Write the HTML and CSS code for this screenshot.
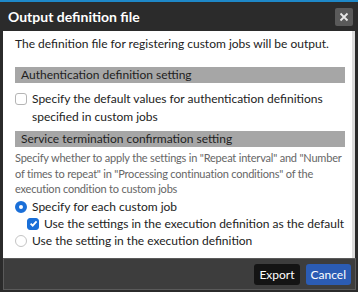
FILE: index.html
```html
<!DOCTYPE html>
<html>
<head>
    <title>Output definition file</title>
    <link rel="stylesheet" href="styles.css">
</head>
<body>
    <div class="dialog">
        <div class="title-bar">
            <div class="title">Output definition file</div>
            <button class="close-btn" title="Close">
                <svg width="10" height="10" viewBox="0 0 10 10"><path d="M1.5 1.5L8.5 8.5M8.5 1.5L1.5 8.5" stroke="#e8e8e8" stroke-width="1.8"/></svg>
            </button>
        </div>
        <div class="content">
            <p class="intro">The definition file for registering custom jobs will be output.</p>
            <div class="section-head">Authentication definition setting</div>
            <label class="option first">
                <span class="box"></span>
                <span class="label-text">Specify the default values for authentication definitions specified in custom jobs</span>
            </label>
            <div class="section-head">Service termination confirmation setting</div>
            <p class="note">Specify whether to apply the settings in "Repeat interval" and "Number of times to repeat" in "Processing continuation conditions" of the execution condition to custom jobs</p>
            <label class="option">
                <span class="radio checked"></span>
                <span class="label-text">Specify for each custom job</span>
            </label>
            <label class="option sub">
                <span class="box checked">
                    <svg width="9" height="9" viewBox="0 0 10 10"><path d="M1.8 5.2L4.1 7.4L8.4 2.6" stroke="#fff" stroke-width="2" fill="none"/></svg>
                </span>
                <span class="label-text">Use the settings in the execution definition as the default</span>
            </label>
            <label class="option">
                <span class="radio"></span>
                <span class="label-text">Use the setting in the execution definition</span>
            </label>
        </div>
        <div class="footer">
            <button class="btn btn-dark">Export</button>
            <button class="btn btn-blue">Cancel</button>
        </div>
    </div>
</body>
</html>
```

FILE: styles.css
```css
body {
    margin: 0;
    background: #fff;
    font-family: Lato, "Noto Sans", sans-serif;
    font-size: 12px;
    color: #222;
}
.dialog {
    width: 358px;
    height: 292px;
    background: #2b2b2b;
    border-top: 2px solid #1e88c8;
    box-sizing: border-box;
    display: flex;
    flex-direction: column;
}
.title-bar {
    flex: none;
    height: 29px;
    display: flex;
    align-items: center;
    justify-content: space-between;
    padding: 0 5px 0 8px;
}
.title {
    color: #fff;
    font-weight: bold;
    font-size: 14px;
}
.close-btn {
    width: 18px;
    height: 18px;
    background: #5a5a5a;
    border: none;
    border-radius: 2px;
    padding: 0;
    display: flex;
    align-items: center;
    justify-content: center;
}
.content {
    flex: 1;
    min-height: 0;
    overflow: hidden;
    background: #fff;
    margin: 0 3px 0 3px;
    padding: 0 7px 0 12px;
    border-right: 3px solid #dcdcdc;
}
.intro {
    margin: 4px 0 14px;
    line-height: 18px;
}
.section-head {
    background: #a6a6a6;
    color: #1e1e1e;
    line-height: 16px;
    padding: 0 6px;
}
.option {
    display: flex;
    align-items: flex-start;
    gap: 5px;
    line-height: 17px;
}
.option.first {
    line-height: 18px;
    margin: 7px 0 5px;
}
.option.sub {
    margin-left: 12px;
}
.box {
    flex: none;
    width: 10px;
    height: 10px;
    margin-top: 3px;
    border: 1px solid #b5b5b5;
    border-radius: 3px;
    display: flex;
    align-items: center;
    justify-content: center;
}
.box.checked {
    background: #1a6fd8;
    border-color: #1a6fd8;
}
.radio {
    flex: none;
    width: 10px;
    height: 10px;
    margin-top: 3px;
    border: 1px solid #c4c4c4;
    border-radius: 50%;
}
.radio.checked {
    width: 4px;
    height: 4px;
    border: 4px solid #1a6fd8;
}
.note {
    margin: 3px 2px 1px 0;
    font-size: 11px;
    letter-spacing: -0.2px;
    line-height: 15.5px;
    color: #666;
}
.footer {
    flex: none;
    height: 30px;
    background: #3d3d3d;
    margin: 0 2px 2px 3px;
    border: 1px solid #5a5a5a;
    display: flex;
    align-items: center;
    justify-content: flex-end;
    gap: 6px;
    padding-right: 4px;
}
.btn {
    height: 21px;
    border: none;
    border-radius: 3px;
    padding: 0 5px;
    color: #fff;
    font-family: inherit;
    font-size: 12px;
}
.btn-dark {
    background: #141414;
}
.btn-blue {
    background: #2b5cb4;
}
```
